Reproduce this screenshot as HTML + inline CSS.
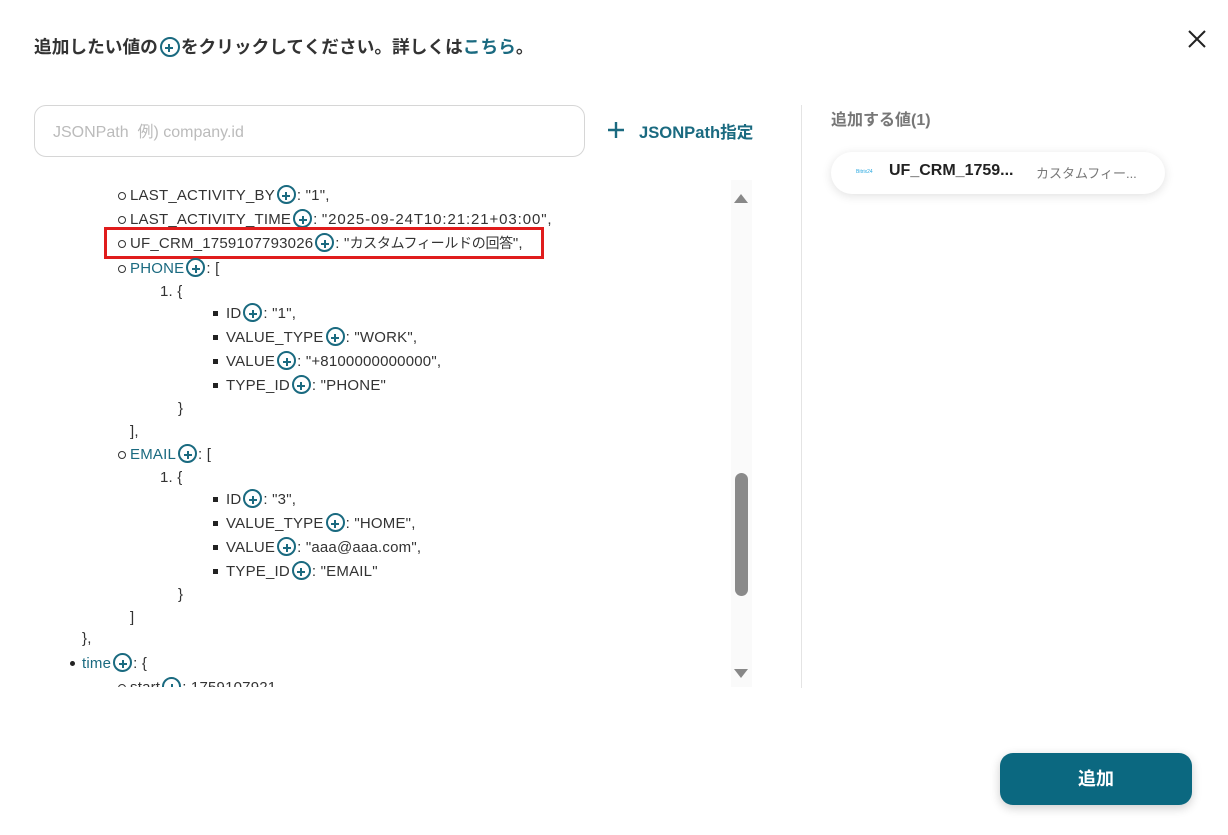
<!DOCTYPE html>
<html><head><meta charset="utf-8"><style>
*{margin:0;padding:0;box-sizing:border-box}
body{width:1228px;height:835px;background:#fff;font-family:"Liberation Sans","Noto Sans CJK JP",sans-serif;color:#333;position:relative;overflow:hidden}
.a{position:absolute;white-space:nowrap}
.t{color:#1a6a80}
.p{display:inline-block;width:19px;height:19px;border:2px solid #1a6a80;border-radius:50%;vertical-align:-4px;position:relative;margin:0 1px 0 2px}
.p:before{content:"";position:absolute;left:3.5px;top:7.5px;width:8px;height:2px;background:#1a6a80}
.p:after{content:"";position:absolute;left:6.5px;top:4.5px;width:2px;height:8px;background:#1a6a80}
.r{position:absolute;font-size:15px;letter-spacing:0.2px;white-space:nowrap;line-height:20px}
.n{letter-spacing:0.9px}
.j{font-size:14px;letter-spacing:-0.3px}
.c:before{content:"";position:absolute;left:-12px;top:7px;width:6px;height:6px;border:1px solid #333;border-radius:50%}
.s:before{content:"";position:absolute;left:-13px;top:8px;width:5px;height:5px;background:#222}
.d:before{content:"";position:absolute;left:-12px;top:8px;width:5px;height:5px;background:#222;border-radius:50%}
</style></head><body>
<div class="a" style="left:34px;top:33px;font-size:17.7px;font-weight:bold;color:#333">追加したい値の<span class="p" style="width:20px;height:20px"></span>をクリックしてください。詳しくは<span class="t">こちら</span>。</div>
<svg class="a" style="left:1187px;top:29px" width="20" height="20" viewBox="0 0 20 20"><path d="M2 2L18 18M18 2L2 18" stroke="#222" stroke-width="2"/></svg>
<div class="a" style="left:34px;top:105px;width:551px;height:52px;border:1px solid #d6d6d6;border-radius:12px;font-size:16px;color:#bbb;padding:12px 18px">JSONPath&nbsp;&nbsp;例) company.id</div>
<svg class="a" style="left:607px;top:121px" width="18" height="18"><path d="M9 1V17M1 9H17" stroke="#1a6a80" stroke-width="2.4"/></svg>
<div class="a t" style="left:639px;top:119px;font-size:16.6px;font-weight:bold">JSONPath指定</div>
<div class="a" style="left:801px;top:105px;width:1px;height:583px;background:#e4e4e4"></div>
<div class="a" style="left:831px;top:106px;font-size:16px;font-weight:bold;color:#777">追加する値(1)</div>
<div class="a" style="left:831px;top:152px;width:334px;height:42px;border-radius:21px;background:#fff;box-shadow:0 2px 10px rgba(0,0,0,.12)">
<div class="a" style="left:25px;top:17px;font-size:5px;color:#29a8e0">Bitrix24</div>
<div class="a" style="left:58px;top:10px;font-size:16px;font-weight:bold;color:#222">UF_CRM_1759...</div>
<div class="a" style="left:205px;top:11px;font-size:13px;color:#777">カスタムフィー...</div>
</div>
<div class="a" style="left:0;top:180px;width:760px;height:507px;overflow:hidden">
<div class="r c" style="left:130px;top:5px">LAST_ACTIVITY_BY<span class="p"></span>: "1",</div>
<div class="r c" style="left:130px;top:29px">LAST_ACTIVITY_TIME<span class="p"></span>: <span class="n">"2025-09-24T10:21:21+03:00",</span></div>
<div class="r c" style="left:130px;top:53px">UF_CRM_1759107793026<span class="p"></span>: "<span class="j">カスタムフィールドの回答</span>",</div>
<div class="a" style="left:104px;top:47px;width:440px;height:32px;border:3px solid #e01c1c"></div>
<div class="r c" style="left:130px;top:78px"><span class="t">PHONE</span><span class="p"></span>: [</div>
<div class="r" style="left:160px;top:102px">1. {</div>
<div class="r s" style="left:226px;top:123px">ID<span class="p"></span>: "1",</div>
<div class="r s" style="left:226px;top:147px">VALUE_TYPE<span class="p"></span>: "WORK",</div>
<div class="r s" style="left:226px;top:171px">VALUE<span class="p"></span>: "+8100000000000",</div>
<div class="r s" style="left:226px;top:195px">TYPE_ID<span class="p"></span>: "PHONE"</div>
<div class="r" style="left:178px;top:219px">}</div>
<div class="r" style="left:130px;top:242px">],</div>
<div class="r c" style="left:130px;top:264px"><span class="t">EMAIL</span><span class="p"></span>: [</div>
<div class="r" style="left:160px;top:288px">1. {</div>
<div class="r s" style="left:226px;top:309px">ID<span class="p"></span>: "3",</div>
<div class="r s" style="left:226px;top:333px">VALUE_TYPE<span class="p"></span>: "HOME",</div>
<div class="r s" style="left:226px;top:357px">VALUE<span class="p"></span>: "aaa@aaa.com",</div>
<div class="r s" style="left:226px;top:381px">TYPE_ID<span class="p"></span>: "EMAIL"</div>
<div class="r" style="left:178px;top:405px">}</div>
<div class="r" style="left:130px;top:428px">]</div>
<div class="r" style="left:82px;top:449px">},</div>
<div class="r d" style="left:82px;top:473px"><span class="t">time</span><span class="p"></span>: {</div>
<div class="r c" style="left:130px;top:497px">start<span class="p"></span>: 1759107921</div>
<div class="a" style="left:731px;top:0;width:21px;height:507px;background:#fafafa"></div>
<svg class="a" style="left:733px;top:12px" width="16" height="12"><path d="M1 11L8 2L15 11Z" fill="#888"/></svg>
<svg class="a" style="left:733px;top:488px" width="16" height="12"><path d="M1 1L8 10L15 1Z" fill="#888"/></svg>
<div class="a" style="left:735px;top:293px;width:13px;height:123px;background:#8a8a8a;border-radius:7px"></div>
</div>
<div class="a" style="left:1000px;top:753px;width:192px;height:52px;background:#0b6880;border-radius:13px;box-shadow:0 3px 10px rgba(0,0,0,.2);color:#fff;font-size:18px;font-weight:bold;text-align:center;line-height:52px">追加</div>
</body></html>
